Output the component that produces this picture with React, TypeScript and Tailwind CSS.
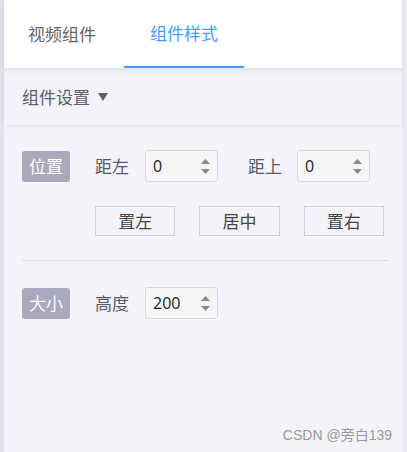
const FONT = { fontFamily: '"Noto Sans CJK SC", "Noto Sans", sans-serif' };

function Spin({ value }: { value: string }) {
  return (
    <div className="flex h-[32px] w-[73px] items-center justify-between rounded-[3px] border border-[#d6dae0] bg-[#f5f5f5] pl-[7px] pr-[7px]">
      <span className="text-[16px] text-[#222]" style={{ fontFamily: '"Open Sans", sans-serif' }}>
        {value}
      </span>
      <div className="flex flex-col gap-[5px]">
        <svg width="9" height="5" viewBox="0 0 9 5">
          <path d="M0 5 L4.5 0 L9 5 Z" fill="#8a8a8a" />
        </svg>
        <svg width="9" height="5" viewBox="0 0 9 5">
          <path d="M0 0 L4.5 5 L9 0 Z" fill="#8a8a8a" />
        </svg>
      </div>
    </div>
  );
}

function Badge({ children }: { children: string }) {
  return (
    <div className="flex h-[31px] w-[48px] items-center justify-center rounded-[3px] bg-[#a9a8bd] text-[17px] text-white">
      {children}
    </div>
  );
}

export default function App() {
  return (
    <div className="h-[452px] w-[407px] overflow-hidden bg-[#f4f3f9]" style={FONT}>
      <div className="flex h-full border-l-[4px] border-[#e3e2ea]">
        <div className="flex w-[398px] flex-col">
          {/* tabs */}
          <div className="relative z-20 flex h-[68px] bg-white shadow-[0_2px_6px_rgba(0,0,0,0.08)]">
            <div className="flex w-[120px] items-center pl-[24px] text-[17px] text-[#666]">
              视频组件
            </div>
            <div className="flex w-[120px] items-center justify-center border-b-2 border-[#409eff] text-[17px] text-[#409eff]">
              组件样式
            </div>
          </div>

          {/* section header */}
          <div className="relative z-10 flex h-[57px] items-center gap-[8px] bg-[#f3f2f8] pl-[18px] shadow-[0_2px_4px_rgba(0,0,0,0.05)]">
            <span className="text-[17px] text-[#5b5e70]">组件设置</span>
            <svg width="10" height="8" viewBox="0 0 10 8">
              <path d="M0 0 L10 0 L5 8 Z" fill="#5b5e70" />
            </svg>
          </div>

          <div className="flex flex-col px-[18px] pt-[25px]">
            <div className="flex items-center">
              <Badge>位置</Badge>
              <span className="ml-[25px] mr-[16px] text-[17px] text-[#555a68]">距左</span>
              <Spin value="0" />
              <span className="ml-[30px] mr-[15px] text-[17px] text-[#555a68]">距上</span>
              <Spin value="0" />
            </div>
            <div className="ml-[73px] mt-[24px] flex gap-[24px]">
              <button className="h-[30px] w-[82px] border border-[#cdd4dc] text-[17px] text-[#444]">置左</button>
              <button className="h-[30px] w-[82px] border border-[#cdd4dc] text-[17px] text-[#444]">居中</button>
              <button className="h-[30px] w-[82px] border border-[#cdd4dc] text-[17px] text-[#444]">置右</button>
            </div>
            <div className="mt-[24px] h-px w-[366px] bg-[#d9d8e6]" />
            <div className="mt-[26px] flex items-center">
              <Badge>大小</Badge>
              <span className="ml-[25px] mr-[16px] text-[17px] text-[#555a68]">高度</span>
              <Spin value="200" />
            </div>
          </div>

          <div className="mt-auto flex justify-end pb-[6px] pr-[10px]">
            <span
              className="text-[14px] text-[#9a9a9a]"
              style={{ fontFamily: '"Liberation Sans", "Noto Sans CJK SC", sans-serif' }}
            >
              CSDN @旁白139
            </span>
          </div>
        </div>
        <div className="flex-1 bg-[#eceaf2]" />
      </div>
    </div>
  );
}
